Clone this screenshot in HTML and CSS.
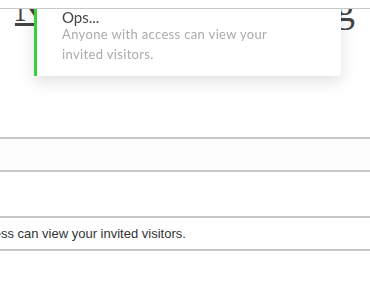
FILE: index.html
```html
<!DOCTYPE html>
<html lang="en">
<head>
<meta charset="utf-8">
<title>Visitors</title>
<link rel="stylesheet" href="styles.css">
</head>
<body>
<div class="topbar"></div>
<main class="page">
  <h1 class="title"><a href="#">Nothing is happening</a></h1>
  <input class="field field-first" type="text" readonly value="">
  <input class="field field-second" type="text" readonly value="Anyone with access can view your invited visitors.">
</main>
<div class="toast" role="alert">
  <h2 class="toast-title">Ops...</h2>
  <p class="toast-text">Anyone with access can view your invited visitors.</p>
</div>
</body>
</html>
```
FILE: styles.css
```css
html, body {
  margin: 0;
  padding: 0;
  background: #fff;
  overflow: hidden;
  font-family: "Liberation Sans", Arial, sans-serif;
}

.topbar {
  position: fixed;
  top: 0;
  left: 0;
  right: 0;
  height: 8px;
  background: #fff;
  border-bottom: 1px solid #c8c8c8;
  z-index: 3;
}

.page {
  width: 576px;
  margin-left: -103px;
  display: flex;
  flex-direction: column;
}

.title {
  margin: -12px 0 0;
  text-align: center;
  font: 400 39.5px/40px "Liberation Serif", "Times New Roman", serif;
}

.title a {
  color: #444;
  text-decoration: underline;
}

.field {
  display: block;
  width: 100%;
  height: 35px;
  box-sizing: border-box;
  margin: 0;
  border: 0;
  border-top: 2px solid #c6c6c6;
  border-bottom: 2px solid #c6c6c6;
  padding: 0 2px;
  font: 13px "Liberation Sans", Arial, sans-serif;
  color: #333;
  background: #fff;
  outline: none;
}

.field-first {
  margin-top: 109px;
  background: #fdfdfd;
}

.field-second {
  margin-top: 44px;
}

.toast {
  position: fixed;
  top: 0;
  left: 34px;
  width: 307px;
  height: 76px;
  box-sizing: border-box;
  padding: 11px 25px 0;
  background: #fff;
  border-left: 3px solid #35d23b;
  border-radius: 0 0 4px 0;
  box-shadow: 0 6px 16px rgba(0, 0, 0, 0.12);
  z-index: 2;
  font-family: Lato, "Open Sans", sans-serif;
}

.toast-title {
  margin: 0;
  font-size: 15px;
  font-weight: 400;
  line-height: 13px;
  color: #444;
}

.toast-text {
  margin: 0;
  max-width: 240px;
  font-size: 13px;
  line-height: 20px;
  letter-spacing: 0.35px;
  color: #ababab;
}
```
